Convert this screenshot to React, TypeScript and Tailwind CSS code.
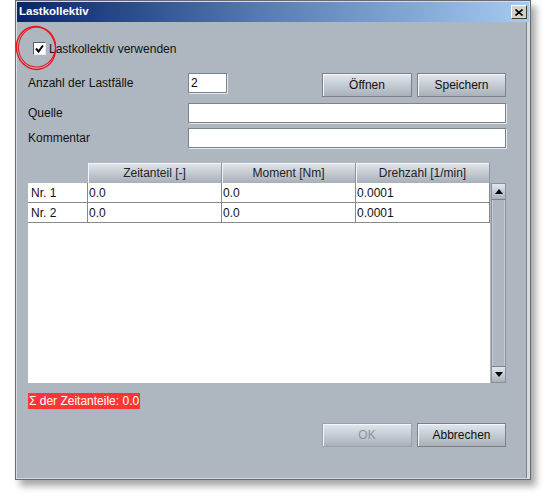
import React from "react";

const font = { fontFamily: '"Liberation Sans", Arial, sans-serif' };

function Btn({ label, disabled = false, w }: { label: string; disabled?: boolean; w: string }) {
  return (
    <div
      className={`${w} h-[24px] flex items-center justify-center text-[12px] border ${
        disabled ? "border-[#9aa1a9] text-[#8e949b]" : "border-[#7a8189] text-[#111]"
      } bg-gradient-to-b from-[#e2e7ed] to-[#a9b1ba] shadow-[inset_1px_1px_0_#f4f6f8]`}
    >
      {label}
    </div>
  );
}

function HeaderCell({ label }: { label: string }) {
  return (
    <div className="w-[134px] h-[20px] flex items-center justify-center text-[12px] text-[#222] bg-gradient-to-b from-[#e3e7ec] to-[#a7afb9] border-r border-[#8d949c] shadow-[inset_1px_1px_0_#f2f4f6]">
      {label}
    </div>
  );
}

function Row({ n, a, b, c }: { n: string; a: string; b: string; c: string }) {
  return (
    <div className="flex h-[20px] border-b border-[#8a8a8a] text-[12px] text-[#111]">
      <div className="w-[60px] pl-[3px] flex items-center border-r border-[#8a8a8a]">{n}</div>
      <div className="w-[134px] pl-[1px] flex items-center border-r border-[#8a8a8a]">{a}</div>
      <div className="w-[134px] pl-[1px] flex items-center border-r border-[#8a8a8a]">{b}</div>
      <div className="w-[134px] pl-[1px] flex items-center border-r border-[#8a8a8a]">{c}</div>
    </div>
  );
}

export default function App() {
  return (
    <div className="w-[545px] h-[495px] bg-white relative overflow-hidden" style={font}>
      <div className="ml-[15px] w-[516px] h-[480px] border border-[#666b72] bg-[#d8dce1] p-[1px] shadow-[5px_6px_7px_rgba(0,0,0,0.35)] flex flex-col">
        <div className="h-[20px] flex items-center justify-between bg-gradient-to-r from-[#0a246a] via-[#5b7fb5] to-[#a6caf0] pl-[2px] pr-[2px]">
          <span className="text-white font-bold text-[11.5px]">Lastkollektiv</span>
          <div className="w-[16px] h-[14px] bg-[#d4d0c8] border border-t-white border-l-white border-b-[#404040] border-r-[#404040] flex items-center justify-center">
            <svg width="8" height="7" viewBox="0 0 8 7">
              <path d="M0.5 0.5 L7.5 6.5 M7.5 0.5 L0.5 6.5" stroke="#000" strokeWidth="1.6" />
            </svg>
          </div>
        </div>
        <div className="flex-1 bg-[#aeb7c0] pl-[11px] pr-[20px] flex flex-col mr-[2px] border-r border-[#7c8289]">
          <div className="mt-[20px] h-[13px] flex items-center">
            <div className="ml-[5px] w-[13px] h-[13px] bg-white border border-t-[#5a5f66] border-l-[#5a5f66] border-b-[#e8ebee] border-r-[#e8ebee] flex items-center justify-center">
              <svg width="9" height="9" viewBox="0 0 9 9">
                <path d="M1 4.5 L3.5 7.5 L8 1.5" fill="none" stroke="#000" strokeWidth="2" />
              </svg>
            </div>
            <span className="ml-[3px] text-[12px] text-[#111]">Lastkollektiv verwenden</span>
          </div>

          <div className="mt-[18px] h-[24px] flex items-start">
            <div className="w-[160px] h-[20px] flex items-center text-[12px] text-[#111]">Anzahl der Lastfälle</div>
            <div className="w-[39px] h-[20px] bg-white border border-[#7b828a] shadow-[1px_1px_0_#e6e9ec] text-[12px] text-black pl-[2px] flex items-center">2</div>
            <div className="flex-1" />
            <Btn label="Öffnen" w="w-[90px]" />
            <div className="w-[5px]" />
            <Btn label="Speichern" w="w-[89px]" />
          </div>

          <div className="mt-[6px] h-[20px] flex items-center">
            <div className="w-[160px] text-[12px] text-[#111]">Quelle</div>
            <div className="flex-1 h-[20px] bg-white border border-[#7b828a] shadow-[1px_1px_0_#e6e9ec]" />
          </div>
          <div className="mt-[5px] h-[20px] flex items-center">
            <div className="w-[160px] text-[12px] text-[#111]">Kommentar</div>
            <div className="flex-1 h-[20px] bg-white border border-[#7b828a] shadow-[1px_1px_0_#e6e9ec]" />
          </div>

          <div className="mt-[15px] flex">
            <div className="w-[60px]" />
            <HeaderCell label="Zeitanteil [-]" />
            <HeaderCell label="Moment [Nm]" />
            <HeaderCell label="Drehzahl [1/min]" />
          </div>
          <div className="flex">
            <div className="w-[462px] h-[200px] bg-white">
              <Row n="Nr. 1" a="0.0" b="0.0" c="0.0001" />
              <Row n="Nr. 2" a="0.0" b="0.0" c="0.0001" />
            </div>
            <div className="ml-[1px] w-[16px] h-[200px] flex flex-col border border-[#8a9199] bg-[#aeb7c0]">
              <div className="h-[16px] bg-gradient-to-b from-[#e2e7ed] to-[#a9b1ba] border-b border-[#7a8189] flex items-center justify-center">
                <svg width="8" height="5" viewBox="0 0 8 5"><path d="M0 5 L4 0 L8 5 Z" fill="#000" /></svg>
              </div>
              <div className="flex-1 border-l border-r border-[#c6ccd2]" />
              <div className="h-[16px] bg-gradient-to-b from-[#e2e7ed] to-[#a9b1ba] border-t border-[#7a8189] flex items-center justify-center">
                <svg width="8" height="5" viewBox="0 0 8 5"><path d="M0 0 L8 0 L4 5 Z" fill="#000" /></svg>
              </div>
            </div>
          </div>

          <div className="mt-[10px] flex">
            <div className="h-[16px] px-[1px] bg-[#ff3535] text-white text-[12px] flex items-center">Σ der Zeitanteile: 0.0</div>
          </div>

          <div className="mt-[14px] flex justify-end">
            <Btn label="OK" disabled w="w-[90px]" />
            <div className="w-[5px]" />
            <Btn label="Abbrechen" w="w-[89px]" />
          </div>
        </div>
      </div>
      <svg className="absolute left-[14px] top-[24px]" width="46" height="48" viewBox="0 0 46 48">
        <ellipse cx="22" cy="24" rx="19.5" ry="21.5" fill="none" stroke="#e8141a" strokeWidth="1.4" transform="rotate(-12 22 24)" />
        <ellipse cx="23" cy="23" rx="18.5" ry="20" fill="none" stroke="#e8141a" strokeWidth="1" transform="rotate(8 23 23)" />
      </svg>
    </div>
  );
}
